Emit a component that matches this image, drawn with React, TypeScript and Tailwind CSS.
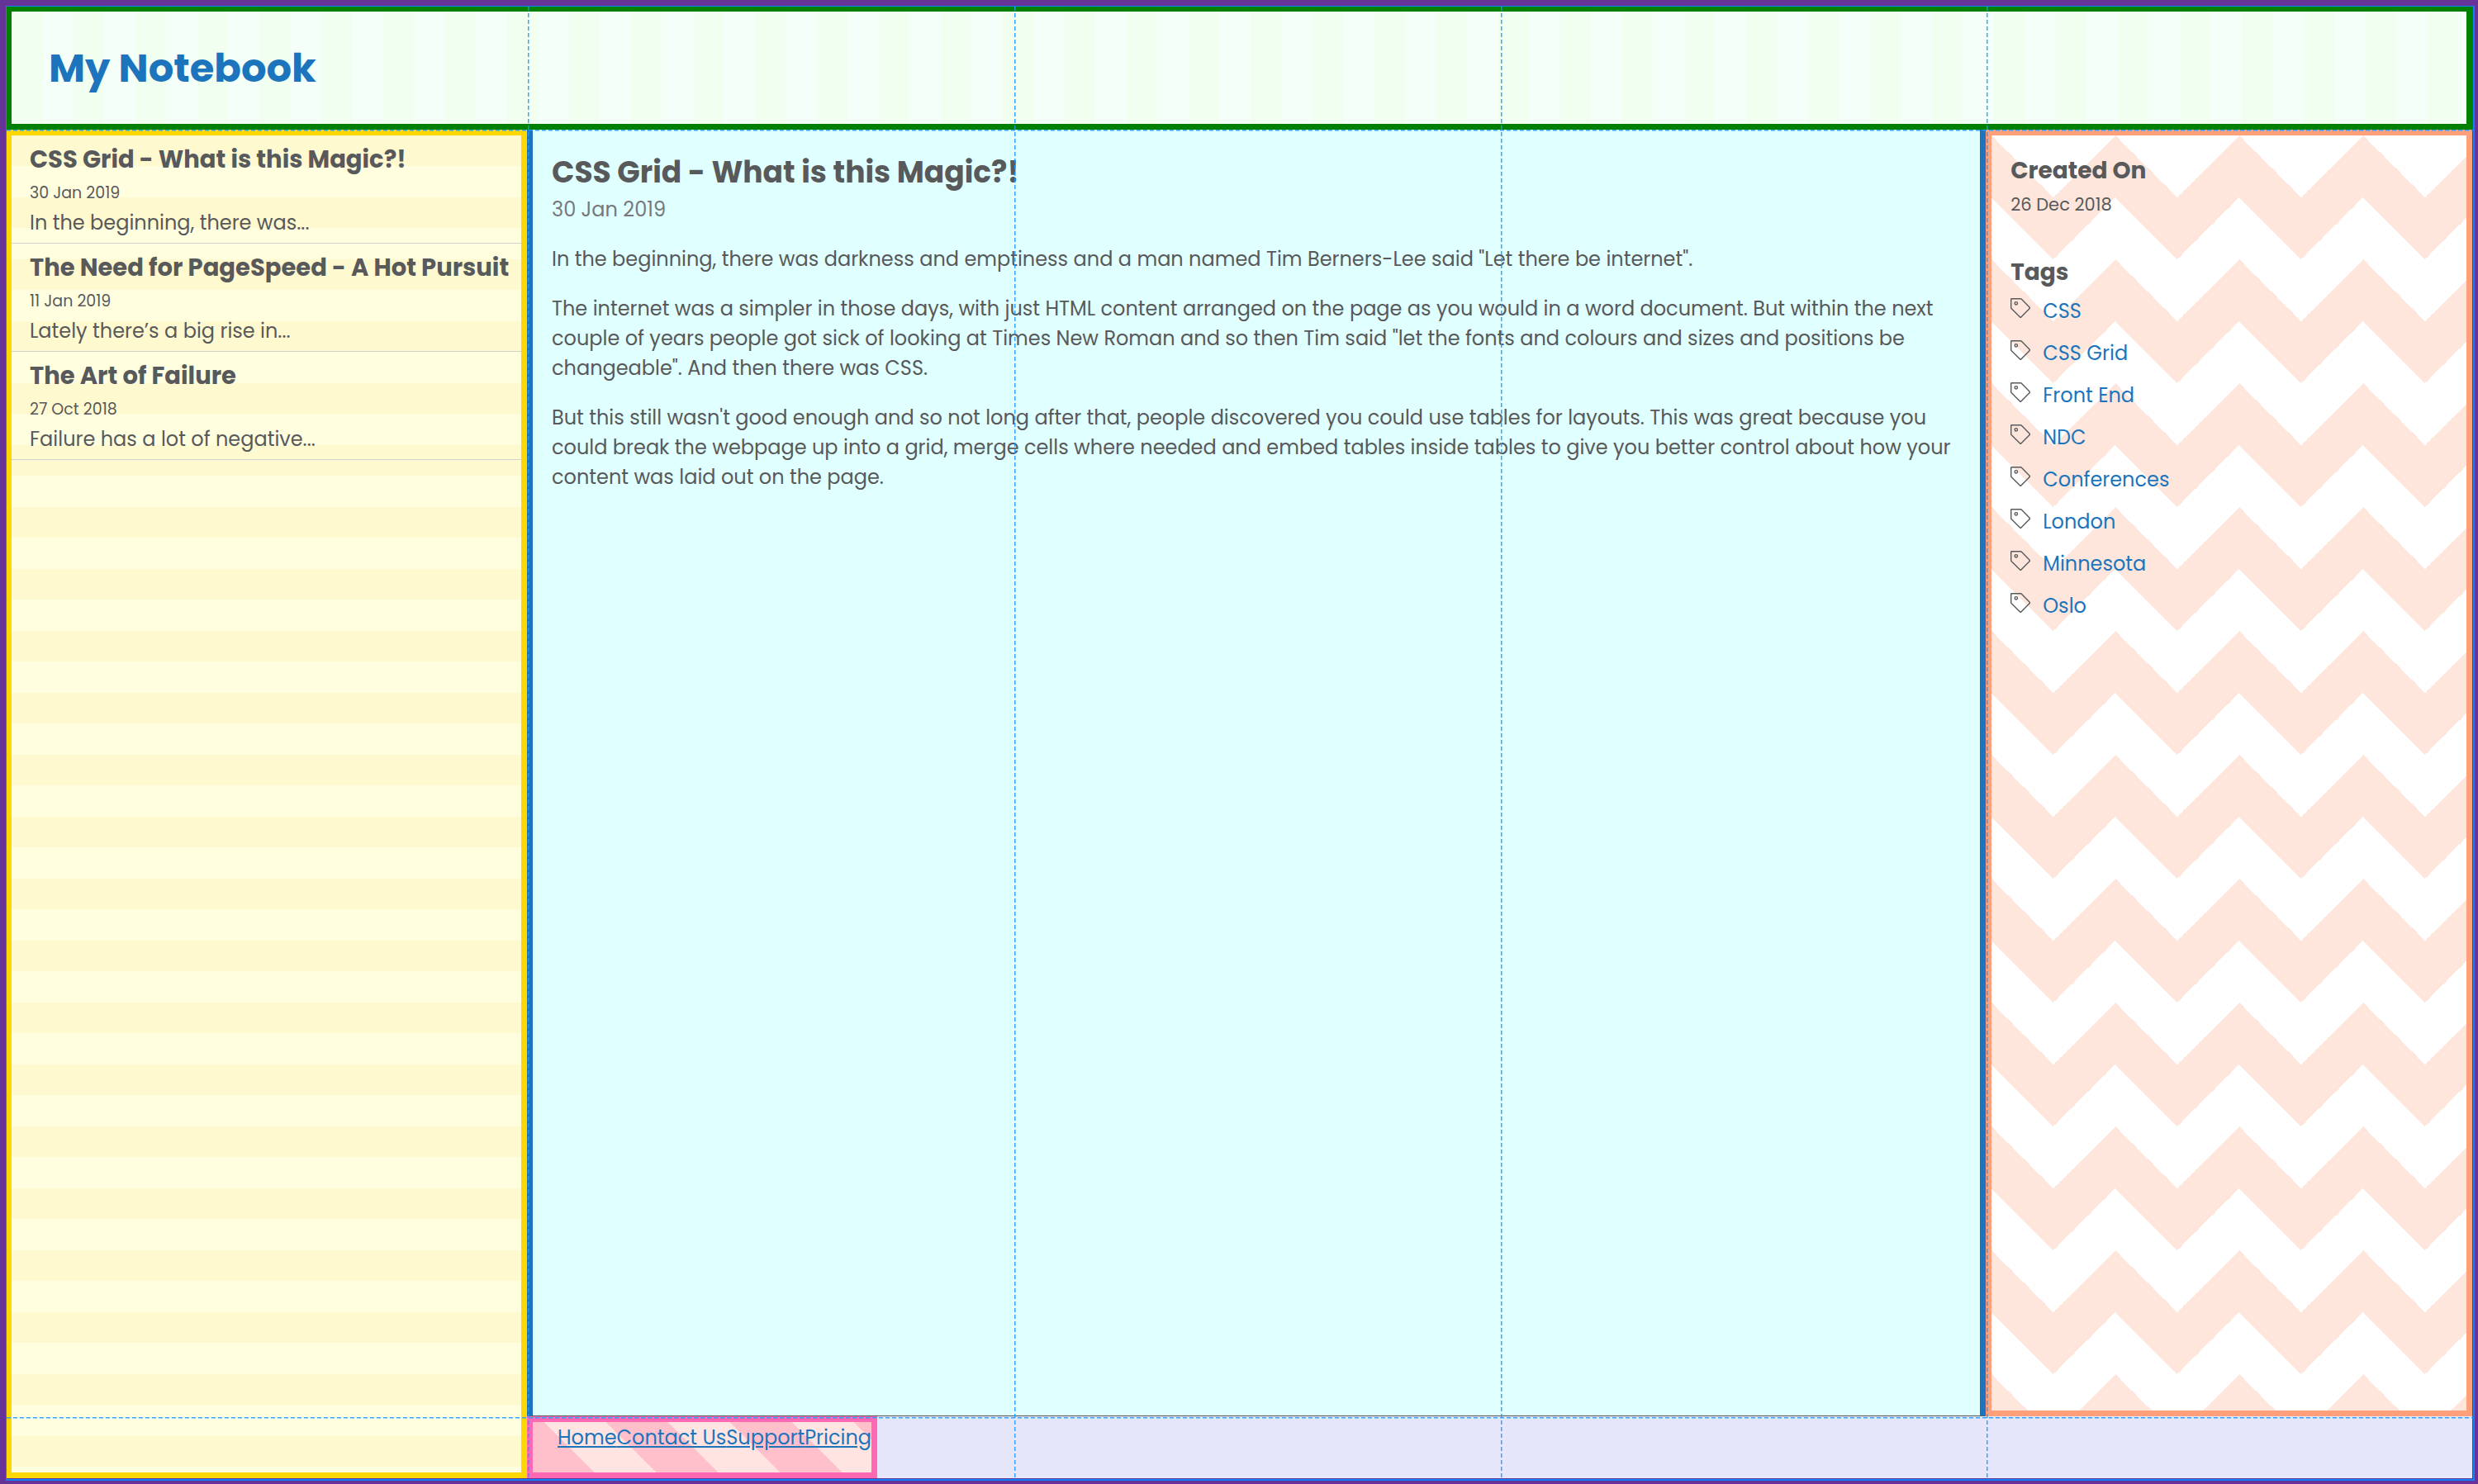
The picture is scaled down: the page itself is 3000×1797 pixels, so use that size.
const notes = [
  { title: 'CSS Grid - What is this Magic?!', date: '30 Jan 2019', excerpt: 'In the beginning, there was...' },
  { title: 'The Need for PageSpeed - A Hot Pursuit', date: '11 Jan 2019', excerpt: 'Lately there’s a big rise in...' },
  { title: 'The Art of Failure', date: '27 Oct 2018', excerpt: 'Failure has a lot of negative...' },
];

const paragraphs = [
  'In the beginning, there was darkness and emptiness and a man named Tim Berners-Lee said "Let there be internet".',
  'The internet was a simpler in those days, with just HTML content arranged on the page as you would in a word document. But within the next couple of years people got sick of looking at Times New Roman and so then Tim said "let the fonts and colours and sizes and positions be changeable". And then there was CSS.',
  "But this still wasn't good enough and so not long after that, people discovered you could use tables for layouts. This was great because you could break the webpage up into a grid, merge cells where needed and embed tables inside tables to give you better control about how your content was laid out on the page.",
];

const tags = ['CSS', 'CSS Grid', 'Front End', 'NDC', 'Conferences', 'London', 'Minnesota', 'Oslo'];
const links = ['Home', 'Contact Us', 'Support', 'Pricing'];

function TagIcon() {
  return (
    <svg viewBox="0 0 24 24" className="mb-2 size-6 shrink-0" fill="none" stroke="#58595b" strokeWidth="1.4" strokeLinejoin="round" aria-hidden="true">
      <path d="M1.2 0.8H12.4C12.8 0.8 13.1 0.9 13.4 1.2L23.2 11.2C23.6 11.6 23.6 12 23.2 12.4L12.8 22.9C12.4 23.3 12 23.3 11.6 22.9L1 12.5C0.8 12.3 0.7 12 0.7 11.7V1.3C0.7 1 0.9 0.8 1.2 0.8Z" />
      <circle cx="6.8" cy="6.3" r="1.7" />
    </svg>
  );
}

function VerticalLine() {
  return (
    <div className="flex w-[2px]">
      <span className="w-px bg-[repeating-linear-gradient(to_bottom,#1e98ffe0_0_5px,transparent_5px_8px)]" />
      <span className="w-px bg-[repeating-linear-gradient(to_bottom,#1e98ff70_0_5px,transparent_5px_8px)]" />
    </div>
  );
}

function HorizontalLine() {
  return (
    <div className="flex h-[2px] flex-col">
      <span className="h-px bg-[repeating-linear-gradient(to_right,#1e98ffe0_0_5px,transparent_5px_8px)]" />
      <span className="h-px bg-[repeating-linear-gradient(to_right,#1e98ff70_0_5px,transparent_5px_8px)]" />
    </div>
  );
}

/* Dashed track lines drawn over the layout, like a grid inspector. */
function GridOverlay() {
  return (
    <div aria-hidden="true" className="pointer-events-none absolute top-[7px] right-[4px] bottom-[4px] left-[7px] border-t border-r-2 border-b-2 border-l border-[#1082f8]">
      <div className="absolute inset-0 grid grid-cols-[631px_repeat(4,minmax(0,1fr))]">
        <span />
        <VerticalLine />
        <VerticalLine />
        <VerticalLine />
        <VerticalLine />
      </div>
      <div className="absolute inset-0 grid grid-rows-[149px_minmax(0,1fr)_75px]">
        <span />
        <HorizontalLine />
        <HorizontalLine />
      </div>
    </div>
  );
}

export default function App() {
  return (
    <div className="relative flex min-h-screen flex-col bg-[#663399] p-[7px] font-['Poppins',Inter,sans-serif] text-2xl leading-9 text-[#58595b]">
      <div className="grid flex-1 grid-cols-[631px_repeat(4,minmax(0,1fr))] grid-rows-[150px_1fr_75px] bg-[#e6e6fa]">
        <header className="col-span-5 flex items-center border-[7px] border-[#008000] bg-[linear-gradient(90deg,#f0fff0_50%,#f5fffa_50%)] bg-[length:75px_75px] pt-px pl-[45px]">
          <h1 className="text-5xl font-bold text-[#1c75bc]">My Notebook</h1>
        </header>

        <aside className="row-span-2 border-[7px] border-[#ffd700] bg-[linear-gradient(180deg,#fff9d0_50%,#ffffe0_50%)] bg-[length:75px_75px]">
          <ul>
            {notes.map((note) => (
              <li key={note.title} className="border-b border-[#d0d0d0] px-[22px] py-[9px]">
                <h2 className="text-[29px] leading-[41px] font-bold whitespace-nowrap">{note.title}</h2>
                <p className="text-[19px] leading-10">{note.date}</p>
                <p className="leading-[31px]">{note.excerpt}</p>
              </li>
            ))}
          </ul>
        </aside>

        <main className="col-span-3 border-x-[7px] border-b border-x-[#1c75bc] border-b-[#58595b] bg-[#e0ffff] px-[23px] pt-[25px]">
          <h2 className="text-4xl leading-[54px] font-bold">CSS Grid - What is this Magic?!</h2>
          <p className="text-[#77787b]">30 Jan 2019</p>
          {paragraphs.map((text) => (
            <p key={text} className="mt-6">{text}</p>
          ))}
        </main>

        <aside className="border-[7px] border-[#ffa07a] bg-[#ffe6dc] bg-[linear-gradient(135deg,#fff_25%,transparent_25%),linear-gradient(225deg,#fff_25%,transparent_25%),linear-gradient(45deg,#fff_25%,transparent_25%),linear-gradient(315deg,#fff_25%,transparent_25%)] bg-[length:150px_150px] bg-[position:75px_0,75px_0,0_0,0_0] px-[23px] pt-[22px]">
          <h3 className="text-[28px] leading-[42px] font-bold">Created On</h3>
          <p className="text-[21px] leading-10">26 Dec 2018</p>
          <h3 className="mt-[41px] text-[28px] leading-[42px] font-bold">Tags</h3>
          <ul>
            {tags.map((tag) => (
              <li key={tag} className="flex h-[51px] items-center gap-[15px]">
                <TagIcon />
                <a href="#" className="text-[#1c75bc]">{tag}</a>
              </li>
            ))}
          </ul>
        </aside>

        <footer className="col-span-4 flex">
          <nav className="border-[7px] border-[#ff69b4] bg-[repeating-linear-gradient(45deg,#ffc0cb_0_53px,#ffe4e1_53px_106px)] pt-px pl-[30px]">
            <ul className="flex">
              {links.map((link) => (
                <li key={link}>
                  <a href="#" className="text-[#1c75bc] underline">{link}</a>
                </li>
              ))}
            </ul>
          </nav>
        </footer>
      </div>
      <GridOverlay />
    </div>
  );
}
